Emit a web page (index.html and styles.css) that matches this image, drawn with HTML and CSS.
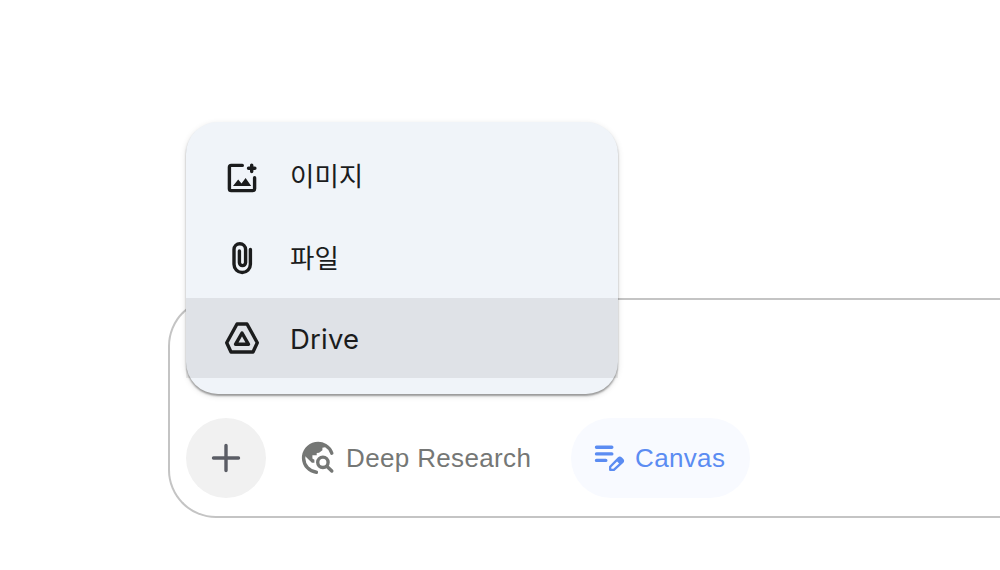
FILE: index.html
```html
<!DOCTYPE html>
<html lang="ko">
<head>
  <meta charset="UTF-8">
  <meta name="viewport" content="width=device-width, initial-scale=1.0">
  <title>Canvas</title>
  <link rel="stylesheet" href="styles.css">
</head>
<body>
  <main class="page">
    <div class="input-box">
      <div class="toolbar">
        <button class="add-btn" aria-label="추가">
          <svg class="icon" viewBox="0 0 40 40"><path d="M20 7.5v25M7.5 20h25"/></svg>
        </button>
        <button class="tool">
          <svg class="icon" viewBox="0 0 40 40">
            <path d="M33.8 15.2A14.5 14.5 0 1 0 18.4 34.3"/>
            <path class="solid" d="M5 19C5 11 11 5.3 19.5 5.3c3.5 0 6 .8 8.5 2.2l-1 1.8-2.6.4v2.6l-3.3 2.4-2.4.2v2.4h-4.3v3.3l2 1.1v3h-2.5L6.5 17.5z"/>
            <circle cx="24.9" cy="24.3" r="5.2"/>
            <path d="M28.8 28.2l5 4.8"/>
          </svg>
          <span>Deep Research</span>
        </button>
        <button class="tool active">
          <svg class="icon" viewBox="0 0 40 40">
            <path d="M7.5 9.3h15.3M7.5 15.9h15.3M7.5 22.4h9.3"/>
            <path class="thin" d="M21.2 28.8l8.3-8.4q1.3-1.2 2.6 0l1.2 1.2q1.3 1.3 0 2.6l-8.4 7.7h-3.7z"/>
            <path class="solid" d="M27.2 22.6l3.4-3.6 4.2 4.2-3.8 3.4z"/>
          </svg>
          <span>Canvas</span>
        </button>
      </div>
      <ul class="menu">
        <li class="menu-item">
          <svg class="icon" viewBox="0 0 40 40">
            <path d="M20.3 7.4H9.2q-1.8 0-1.8 1.8v21.6q0 1.8 1.8 1.8h21.6q1.8 0 1.8-1.8V19.7"/>
            <path d="M29.7 7.1v6.4M26.5 10.3h6.4"/>
            <path class="solid" d="M11 28l5.2-6.6 3.3 4L23.6 20l5.6 8z"/>
          </svg>
          <span class="label image-label">이미지</span>
        </li>
        <li class="menu-item">
          <svg class="icon" viewBox="0 0 40 40"><path d="M28.4 11.5v14.8a8.2 8.2 0 0 1-16.4 0V11.5a5.8 5.8 0 0 1 11.6 0v13a3.1 3.1 0 0 1-6.2 0V13"/></svg>
          <span class="label">파일</span>
        </li>
        <li class="menu-item hover">
          <svg class="icon" viewBox="0 0 40 40">
            <path d="M15 6h10l10.3 18.7L31 34H9L4.7 24.7z"/>
            <path d="M20 15l6.5 11.3h-13z"/>
          </svg>
          <span class="label-en">Drive</span>
        </li>
      </ul>
    </div>
  </main>
</body>
</html>
```
FILE: styles.css
```css
* {
  box-sizing: border-box;
}
body {
  margin: 0;
  background-color: #fff;
  overflow: hidden;
}
.page {
  height: 570px;
  padding: 298px 0 52px 168px;
}
.input-box {
  position: relative;
  display: flex;
  align-items: flex-end;
  height: 220px;
  padding: 0 16px 18px;
  border: 2px solid #c4c4c4;
  border-right: none;
  border-radius: 48px 0 0 48px;
}
.toolbar {
  display: flex;
}
button {
  border: none;
  background: none;
  padding: 0;
  font-family: "Liberation Sans", Arial, sans-serif;
  font-size: 26px;
  letter-spacing: 0.35px;
}
.icon {
  width: 40px;
  height: 40px;
  flex: none;
  fill: none;
  stroke: currentColor;
  stroke-width: 3.4;
  stroke-linecap: round;
  stroke-linejoin: round;
}
.icon .solid {
  fill: currentColor;
  stroke: none;
}
.icon .thin {
  stroke-width: 2.3;
}
.add-btn {
  display: flex;
  align-items: center;
  justify-content: center;
  width: 80px;
  height: 80px;
  border-radius: 50%;
  background-color: #f1f1f1;
  color: #5b5d65;
}
.tool {
  display: flex;
  align-items: center;
  gap: 8px;
  width: 269px;
  height: 80px;
  margin-left: 14px;
  padding: 0 18px;
  border-radius: 40px;
  color: #757775;
  white-space: nowrap;
}
.tool.active {
  width: 179px;
  margin-left: 22px;
  gap: 6px;
  background-color: #f8faff;
  color: #5b8cf2;
}
.menu {
  position: absolute;
  left: 16px;
  bottom: 122px;
  width: 432px;
  margin: 0;
  padding: 16px 0;
  list-style: none;
  border-radius: 32px;
  background-color: #f0f4f9;
  box-shadow: 0 2px 2px rgba(0,0,0,0.35), 0 2px 6px rgba(0,0,0,0.12);
}
.menu-item {
  display: flex;
  align-items: center;
  gap: 28px;
  height: 80px;
  padding: 0 36px;
  color: #1b1c1d;
}
.menu-item.hover {
  background-color: rgba(27,28,29,0.08);
}
.label {
  padding-bottom: 3px;
  font-family: "Noto Sans CJK KR", sans-serif;
  font-size: 26.5px;
  line-height: 36px;
}
.image-label {
  padding-bottom: 6px;
}
.label-en {
  padding-top: 2px;
  font-family: Inter, sans-serif;
  font-size: 27.5px;
  font-weight: 400;
  letter-spacing: 0.2px;
}
```
